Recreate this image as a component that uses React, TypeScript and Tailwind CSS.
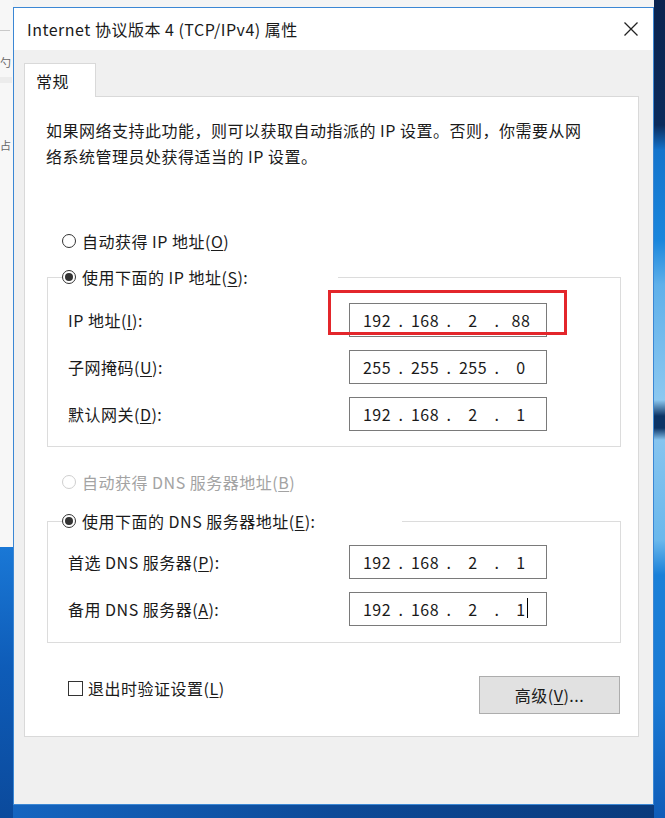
import { Fragment } from "react";

function Mn({ c }: { c: string }) {
  return <u className="underline underline-offset-[2px]">{c}</u>;
}

function Radio({ checked, disabled }: { checked?: boolean; disabled?: boolean }) {
  return (
    <span
      className={`flex h-[14px] w-[14px] shrink-0 items-center justify-center rounded-full border bg-white ${
        disabled ? "border-[#cfcfcf]" : "border-[#333333]"
      }`}
    >
      {checked && <span className="h-[8px] w-[8px] rounded-full bg-[#333333]" />}
    </span>
  );
}

function IpField({ parts, cursor }: { parts: string[]; cursor?: boolean }) {
  return (
    <div className="flex h-[34px] w-[198px] items-center border border-[#7a7a7a] bg-white pl-[9px] text-[16px] text-[#1a1a1a]">
      {parts.map((p, i) => (
        <Fragment key={i}>
          <span className="w-[36px] text-center">
            <span className="relative">
              {p}
              {cursor && i === 3 && (
                <span className="absolute -right-[2px] top-[1px] h-[20px] w-px bg-black" />
              )}
            </span>
          </span>
          {i < 3 && <span className="w-[12px] text-center">.</span>}
        </Fragment>
      ))}
    </div>
  );
}

function Row({ label, parts, cursor, marked }: { label: React.ReactNode; parts: string[]; cursor?: boolean; marked?: boolean }) {
  return (
    <div className="flex items-center">
      <span className="ml-[20px] w-[281px]">{label}</span>
      <div className="relative">
        <IpField parts={parts} cursor={cursor} />
        {marked && (
          <div className="absolute -left-[21px] -top-[13px] h-[45px] w-[239px] border-[3px] border-[#e3262b]" />
        )}
      </div>
    </div>
  );
}

export default function App() {
  return (
    <div className="flex h-[818px] w-[665px] overflow-hidden font-['Noto_Sans_CJK_SC',sans-serif] text-[16px] tracking-[0.5px] text-[#1a1a1a]">
      {/* desktop, left */}
      <div className="flex w-[13px] shrink-0 flex-col">
        <div className="h-[547px] overflow-hidden bg-[#f7f7f7] text-[11px] leading-[14px] tracking-normal text-[#666]">
          <div className="mt-[30px] h-px w-[10px] bg-[#c9c9c9]" />
          <div className="mt-[24px]">勺</div>
          <div className="mt-[8px] h-[6px] w-[12px] bg-[#ececec]" />
          <div className="mt-[55px]">占</div>
        </div>
        <div className="flex-1 bg-[linear-gradient(to_bottom,#1a78d6,#0e5cb8_120px,#0b4a9c)]" />
      </div>

      {/* middle */}
      <div className="flex w-[641px] shrink-0 flex-col">
        <div className="h-[7px] bg-[#f4f4f4]" />
        <div className="flex h-[798px] flex-col border border-[#3b87d4] bg-white">
          {/* title bar */}
          <div className="flex h-[42px] items-center justify-between pl-[13px] pr-[15px]">
            <span className="text-[16px] text-[#1a1a1a]">Internet 协议版本 4 (TCP/IPv4) 属性</span>
            <svg width="14" height="14" viewBox="0 0 14 14" fill="none" stroke="#222" strokeWidth="1.3">
              <path d="M0.5 0.5 L13.5 13.5 M13.5 0.5 L0.5 13.5" />
            </svg>
          </div>

          {/* body */}
          <div className="flex-1 bg-[#f0f0f0] pl-[10px] pt-[13px]">
            <div className="relative z-10 flex h-[34px] w-[72px] items-center border border-b-0 border-[#d9d9d9] bg-white pl-[11px]">
              常规
            </div>
            <div className="-mt-px h-[641px] w-[615px] border border-[#d9d9d9] bg-white pl-[22px]">
              <p className="-ml-px mt-[20px] leading-[26px]">
                如果网络支持此功能，则可以获取自动指派的 IP 设置。否则，你需要从网
                <br />
                络系统管理员处获得适当的 IP 设置。
              </p>

              <div className="ml-[15px] mt-[60px] flex h-[24px] items-center gap-[6px]">
                <Radio />
                <span>
                  自动获得 IP 地址(<Mn c="O" />)
                </span>
              </div>

              <fieldset className="mt-[12px] w-[574px] border border-[#dcdcdc] pb-[15px]">
                <legend className="ml-[14px] flex h-[24px] w-[276px] items-center gap-[6px]">
                  <Radio checked />
                  <span>
                    使用下面的 IP 地址(<Mn c="S" />):
                  </span>
                </legend>
                <div className="flex flex-col gap-[13px] pt-[14px]">
                  <Row
                    label={<>IP 地址(<Mn c="I" />):</>}
                    parts={["192", "168", "2", "88"]}
                    marked
                  />
                  <Row label={<>子网掩码(<Mn c="U" />):</>} parts={["255", "255", "255", "0"]} />
                  <Row label={<>默认网关(<Mn c="D" />):</>} parts={["192", "168", "2", "1"]} />
                </div>
              </fieldset>

              <div className="ml-[15px] mt-[23px] flex h-[24px] items-center gap-[6px] text-[#a3a3a3]">
                <Radio disabled />
                <span>
                  自动获得 DNS 服务器地址(<Mn c="B" />)
                </span>
              </div>

              <fieldset className="mt-[15px] w-[574px] border border-[#dcdcdc] pb-[16px]">
                <legend className="ml-[14px] flex h-[24px] w-[340px] items-center gap-[6px]">
                  <Radio checked />
                  <span>
                    使用下面的 DNS 服务器地址(<Mn c="E" />):
                  </span>
                </legend>
                <div className="flex flex-col gap-[13px] pt-[12px]">
                  <Row label={<>首选 DNS 服务器(<Mn c="P" />):</>} parts={["192", "168", "2", "1"]} />
                  <Row label={<>备用 DNS 服务器(<Mn c="A" />):</>} parts={["192", "168", "2", "1"]} cursor />
                </div>
              </fieldset>

              <div className="mt-[33px] flex w-[574px] items-start justify-between">
                <div className="ml-[21px] flex h-[24px] items-center gap-[5px]">
                  <span className="h-[15px] w-[15px] border border-[#333333] bg-white" />
                  <span>
                    退出时验证设置(<Mn c="L" />)
                  </span>
                </div>
                <button className="mr-[1px] flex h-[38px] w-[141px] items-center justify-center border border-[#adadad] bg-[#e1e1e1]">
                  高级(<Mn c="V" />)...
                </button>
              </div>
            </div>
          </div>
        </div>
        <div className="flex-1 bg-[linear-gradient(to_right,#1565c0,#0d4a98_50%,#0a3a7c)]" />
      </div>

      {/* desktop, right */}
      <div className="w-[11px] shrink-0 bg-[linear-gradient(to_bottom,#0a2450_0px,#0b2b5c_125px,#1474cc_150px,#1a86dc_240px,#5fb0ea_285px,#8cc8f0_400px,#0c3466_416px,#0c3466_428px,#86c4ef_440px,#6ab8ec_540px,#1a80d8_575px,#1a7ad4_700px,#0f5cb8_818px)]" />
    </div>
  );
}
